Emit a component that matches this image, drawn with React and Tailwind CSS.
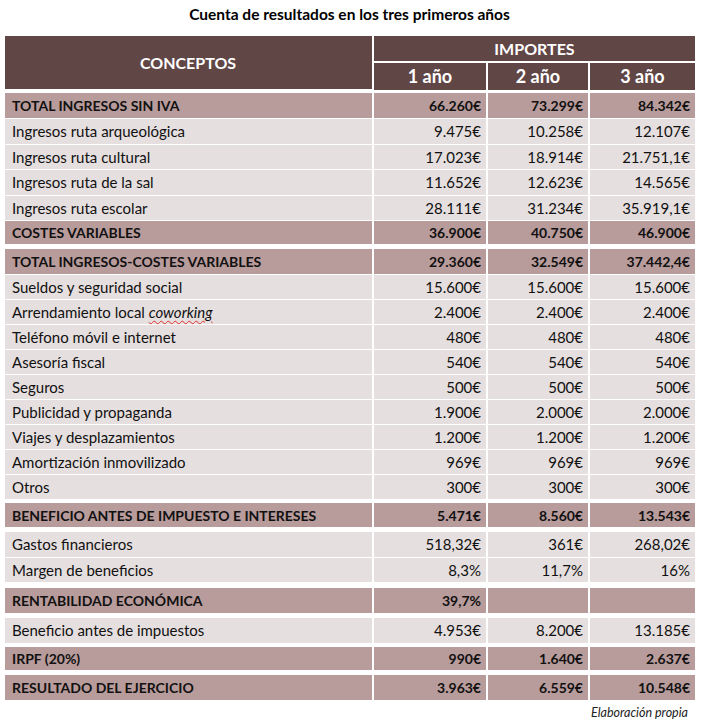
import React from "react";

const F = { fontFamily: "Lato, 'Open Sans', sans-serif" };

function Row({ label, v, bold, h, mt, children }) {
  const bg = bold ? "bg-[#b89b9b]" : "bg-[#e6dfdf]";
  const txt = bold ? "font-bold text-[14px]" : "text-[15px]";
  return (
    <div className={`grid grid-cols-[367px_112px_100px_105px] gap-x-[2px] ${h} ${mt}`}>
      <div className={`${bg} flex items-center pl-[7px] text-[#111] ${txt}`}>
        {children || label}
      </div>
      {v.map((x, i) => (
        <div
          key={i}
          className={`${bg} flex items-center justify-end pr-[5px] text-[#111] ${txt}`}
        >
          {x}
        </div>
      ))}
    </div>
  );
}

export default function App() {
  return (
    <div className="w-[717px] h-[722px] bg-white relative" style={F}>
      <div className="h-[36px] flex items-start justify-center pt-[5px]">
        <div className="text-[15.5px] font-bold text-black leading-[18px] pr-[18px]">
          Cuenta de resultados en los tres primeros años
        </div>
      </div>
      <div className="pl-[5px]">
        <div className="grid grid-cols-[367px_321px] gap-x-[2px] h-[53px]">
          <div className="bg-[#614646] flex items-center justify-center text-white font-bold text-[16px] pr-[1px]">
            CONCEPTOS
          </div>
          <div className="flex flex-col gap-y-[2px]">
            <div className="bg-[#614646] h-[25px] flex items-center justify-center text-white font-bold text-[16px]">
              IMPORTES
            </div>
            <div className="grid grid-cols-[112px_100px_105px] gap-x-[2px] h-[26px]">
              <div className="bg-[#614646] flex items-center justify-center text-white font-bold text-[18px]">1 año</div>
              <div className="bg-[#614646] flex items-center justify-center text-white font-bold text-[18px]">2 año</div>
              <div className="bg-[#614646] flex items-center justify-center text-white font-bold text-[18px]">3 año</div>
            </div>
          </div>
        </div>

        <Row bold label="TOTAL INGRESOS SIN IVA" v={["66.260€", "73.299€", "84.342€"]} h="h-[25px]" mt="mt-[4px]" />
        <Row label="Ingresos ruta arqueológica" v={["9.475€", "10.258€", "12.107€"]} h="h-[25px]" mt="mt-px" />
        <Row label="Ingresos ruta cultural" v={["17.023€", "18.914€", "21.751,1€"]} h="h-[24px]" mt="mt-px" />
        <Row label="Ingresos ruta de la sal" v={["11.652€", "12.623€", "14.565€"]} h="h-[25px]" mt="mt-px" />
        <Row label="Ingresos ruta escolar" v={["28.111€", "31.234€", "35.919,1€"]} h="h-[24px]" mt="mt-px" />
        <Row bold label="COSTES VARIABLES" v={["36.900€", "40.750€", "46.900€"]} h="h-[23px]" mt="mt-px" />

        <Row bold label="TOTAL INGRESOS-COSTES VARIABLES" v={["29.360€", "32.549€", "37.442,4€"]} h="h-[25px]" mt="mt-[5px]" />
        <Row label="Sueldos y seguridad social" v={["15.600€", "15.600€", "15.600€"]} h="h-[24px]" mt="mt-px" />
        <Row v={["2.400€", "2.400€", "2.400€"]} h="h-[24px]" mt="mt-px">
          <span>
            Arrendamiento local{" "}
            <span className="italic underline decoration-wavy decoration-[#e03030] decoration-[1px] underline-offset-[2px]">
              coworking
            </span>
          </span>
        </Row>
        <Row label="Teléfono móvil e internet" v={["480€", "480€", "480€"]} h="h-[24px]" mt="mt-px" />
        <Row label="Asesoría fiscal" v={["540€", "540€", "540€"]} h="h-[24px]" mt="mt-px" />
        <Row label="Seguros" v={["500€", "500€", "500€"]} h="h-[24px]" mt="mt-px" />
        <Row label="Publicidad y propaganda" v={["1.900€", "2.000€", "2.000€"]} h="h-[24px]" mt="mt-px" />
        <Row label="Viajes y desplazamientos" v={["1.200€", "1.200€", "1.200€"]} h="h-[24px]" mt="mt-px" />
        <Row label="Amortización inmovilizado" v={["969€", "969€", "969€"]} h="h-[24px]" mt="mt-px" />
        <Row label="Otros" v={["300€", "300€", "300€"]} h="h-[24px]" mt="mt-px" />

        <Row bold label="BENEFICIO ANTES DE IMPUESTO E INTERESES" v={["5.471€", "8.560€", "13.543€"]} h="h-[24px]" mt="mt-[4px]" />
        <Row label="Gastos financieros" v={["518,32€", "361€", "268,02€"]} h="h-[25px]" mt="mt-[5px]" />
        <Row label="Margen de beneficios" v={["8,3%", "11,7%", "16%"]} h="h-[24px]" mt="mt-px" />
        <Row bold label="RENTABILIDAD ECONÓMICA" v={["39,7%", "", ""]} h="h-[25px]" mt="mt-[6px]" />
        <Row label="Beneficio antes de impuestos" v={["4.953€", "8.200€", "13.185€"]} h="h-[25px]" mt="mt-[5px]" />
        <Row bold label="IRPF (20%)" v={["990€", "1.640€", "2.637€"]} h="h-[23px]" mt="mt-[4px]" />
        <Row bold label="RESULTADO DEL EJERCICIO" v={["3.963€", "6.559€", "10.548€"]} h="h-[25px]" mt="mt-[5px]" />

        <div className="w-[690px] flex justify-end pr-[7px] mt-[4px]">
          <span className="italic text-[12.5px] text-[#222]">Elaboración propia</span>
        </div>
      </div>
    </div>
  );
}
